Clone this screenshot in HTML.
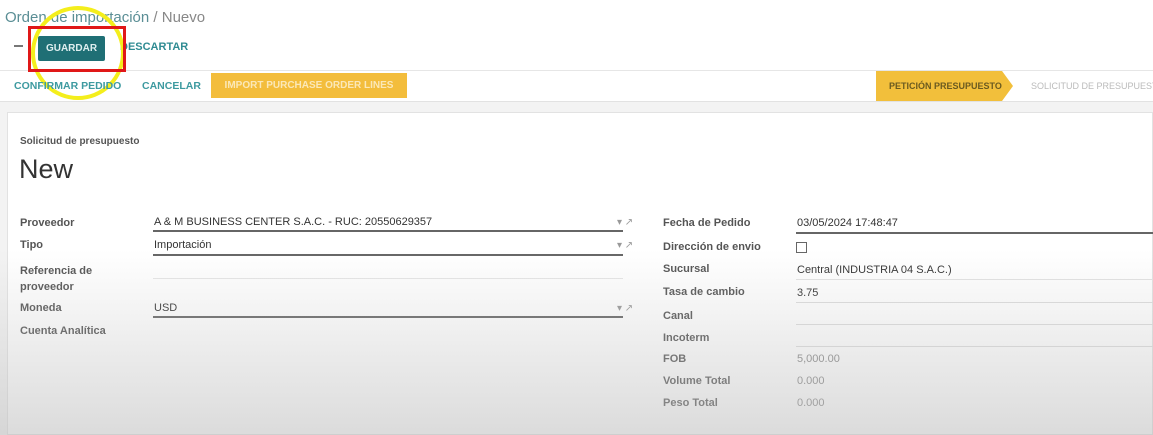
<!DOCTYPE html>
<html><head><meta charset="utf-8"><style>
*{margin:0;padding:0;box-sizing:border-box}
body{width:1153px;height:435px;overflow:hidden;background:#f3f3f3;font-family:"Liberation Sans",sans-serif;position:relative;color:#444}
.a{position:absolute;white-space:nowrap}
.lbl{font-size:11px;font-weight:bold;color:#555}
.val{font-size:11px;color:#333}
.line{position:absolute;height:1px;background:#ccc}
.dark{background:#666;height:1.5px}
.ext{font-size:10px;color:#999}
</style></head><body>
<div class="a" style="left:0;top:0;width:1153px;height:70px;background:#fff"></div>
<div class="a" style="left:0;top:70px;width:1153px;height:32px;background:#fff;border-top:1px solid #e6e6e6;border-bottom:1px solid #e2e2e2"></div>
<div class="a" style="left:5px;top:9px;font-size:15px;color:#5a8e95">Orden de importación <span style="color:#888">/ Nuevo</span></div>
<div class="a" style="left:14px;top:45px;width:9px;height:1.5px;background:#777"></div>
<div class="a" style="left:38px;top:36px;width:67px;height:25px;background:#1f6f75;color:#dfeff0;font-size:10px;font-weight:bold;text-align:center;line-height:25px;border-radius:2px">GUARDAR</div>
<div class="a" style="left:120px;top:41px;font-size:11px;font-weight:bold;color:#2f8b92">DESCARTAR</div>
<div class="a" style="left:31px;top:6px;width:94px;height:94px;border:4px solid #f4ee1c;border-radius:50%"></div>
<div class="a" style="left:28px;top:26px;width:98px;height:46px;border:3px solid #e01818"></div>
<div class="a" style="left:14px;top:80px;font-size:10.5px;font-weight:bold;color:#3d9aa0">CONFIRMAR PEDIDO</div>
<div class="a" style="left:142px;top:80px;font-size:10.5px;font-weight:bold;color:#3d9aa0">CANCELAR</div>
<div class="a" style="left:211px;top:73px;width:196px;height:25px;background:#f3bd3c;color:#fbe8b8;font-size:10px;font-weight:bold;text-align:center;line-height:25px">IMPORT PURCHASE ORDER LINES</div>
<div class="a" style="left:876px;top:71px;width:137px;height:30px;background:#f2bf3b;clip-path:polygon(0 0,92% 0,100% 50%,92% 100%,0 100%)"></div>
<div class="a" style="left:889px;top:81px;font-size:9px;font-weight:bold;color:#6a5a20">PETICIÓN PRESUPUESTO</div>
<div class="a" style="left:1031px;top:81px;font-size:9px;color:#bbb">SOLICITUD DE PRESUPUESTO</div>
<div class="a" style="left:7px;top:112px;width:1146px;height:323px;background:#fff;border:1px solid #e2e2e2"></div>
<div class="a" style="left:20px;top:136px;font-size:10px;font-weight:bold;color:#555">Solicitud de presupuesto</div>
<div class="a" style="left:19px;top:154px;font-size:27px;color:#333">New</div>
<div class="a lbl" style="left:20px;top:217px">Proveedor</div>
<div class="a val" style="left:154px;top:216px">A &amp; M BUSINESS CENTER S.A.C. - RUC: 20550629357</div>
<div class="line dark" style="left:153px;top:230px;width:470px"></div>
<div class="a lbl" style="left:20px;top:239px">Tipo</div>
<div class="a val" style="left:154px;top:239px">Importación</div>
<div class="line dark" style="left:153px;top:254px;width:470px"></div>
<div class="a lbl" style="left:20px;top:263px;line-height:16px">Referencia de<br>proveedor</div>
<div class="line" style="left:153px;top:278px;width:470px;background:#e6e6e6"></div>
<div class="a lbl" style="left:20px;top:302px">Moneda</div>
<div class="a val" style="left:154px;top:302px">USD</div>
<div class="line dark" style="left:153px;top:316px;width:470px"></div>
<div class="a lbl" style="left:20px;top:325px">Cuenta Analítica</div>
<div class="a ext" style="left:617px;top:217px">▾ ↗</div>
<div class="a ext" style="left:617px;top:240px">▾ ↗</div>
<div class="a ext" style="left:617px;top:303px">▾ ↗</div>
<div class="a lbl" style="left:663px;top:217px">Fecha de Pedido</div>
<div class="a val" style="left:797px;top:217px">03/05/2024 17:48:47</div>
<div class="line dark" style="left:796px;top:232px;width:357px"></div>
<div class="a lbl" style="left:663px;top:241px">Dirección de envio</div>
<div class="a" style="left:796px;top:242px;width:11px;height:11px;border:1px solid #666"></div>
<div class="a lbl" style="left:663px;top:263px">Sucursal</div>
<div class="a val" style="left:797px;top:264px">Central (INDUSTRIA 04 S.A.C.)</div>
<div class="line" style="left:796px;top:279px;width:357px;background:#e2e2e2"></div>
<div class="a lbl" style="left:663px;top:286px">Tasa de cambio</div>
<div class="a val" style="left:797px;top:287px">3.75</div>
<div class="line" style="left:796px;top:302px;width:357px;background:#ddd"></div>
<div class="a lbl" style="left:663px;top:310px">Canal</div>
<div class="line" style="left:796px;top:324px;width:357px;background:#ddd"></div>
<div class="a lbl" style="left:663px;top:332px">Incoterm</div>
<div class="line" style="left:796px;top:346px;width:357px;background:#ddd"></div>
<div class="a lbl" style="left:663px;top:353px">FOB</div>
<div class="a val" style="left:797px;top:353px;color:#888">5,000.00</div>
<div class="a lbl" style="left:663px;top:375px">Volume Total</div>
<div class="a val" style="left:797px;top:375px;color:#888">0.000</div>
<div class="a lbl" style="left:663px;top:397px">Peso Total</div>
<div class="a val" style="left:797px;top:397px;color:#888">0.000</div>
<div class="a" style="left:0;top:250px;width:1153px;height:185px;background:linear-gradient(rgba(200,200,200,0),rgba(190,190,190,0.55))"></div>
</body></html>
